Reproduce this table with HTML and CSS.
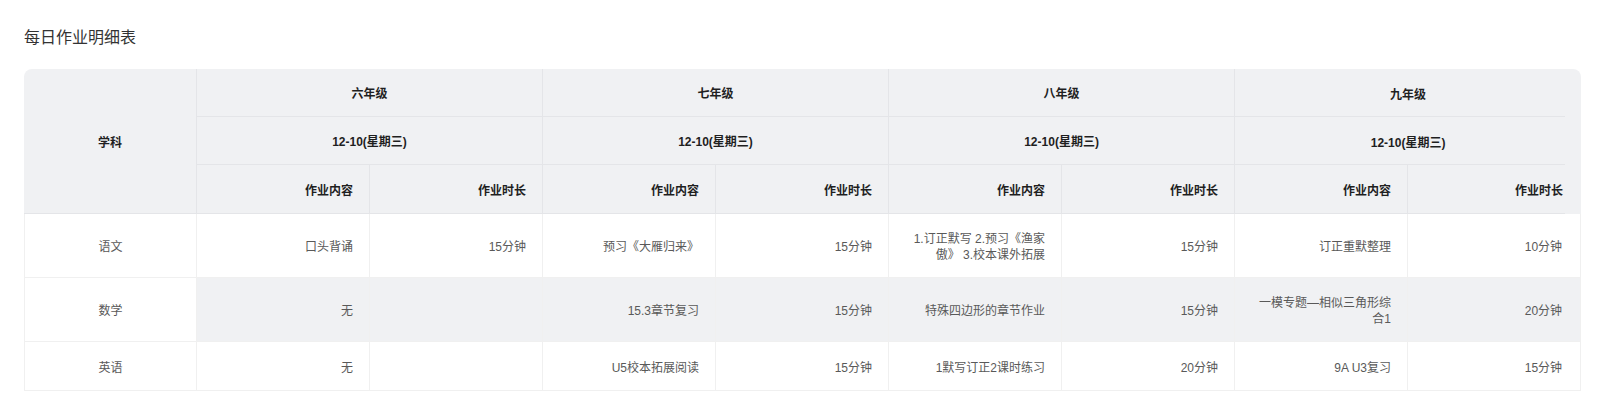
FILE: index.html
```html
<!DOCTYPE html>
<html lang="zh-CN">
<head>
<meta charset="utf-8">
<title>每日作业明细表</title>
<link rel="stylesheet" href="styles.css">
</head>
<body>
<div class="page">
  <h2 class="title">每日作业明细表</h2>
  <div class="table-wrap">
    <table class="hw-table">
      <colgroup>
        <col class="c"><col class="c"><col class="c"><col class="c"><col class="c"><col class="c"><col class="c"><col class="c"><col class="c">
      </colgroup>
      <thead>
        <tr class="hrow">
          <th rowspan="3" class="subj-h">学科</th>
          <th colspan="2" class="grade">六年级</th>
          <th colspan="2" class="grade">七年级</th>
          <th colspan="2" class="grade">八年级</th>
          <th colspan="2" class="grade last">九年级</th>
        </tr>
        <tr class="hrow">
          <th colspan="2" class="grade">12-10(星期三)</th>
          <th colspan="2" class="grade">12-10(星期三)</th>
          <th colspan="2" class="grade">12-10(星期三)</th>
          <th colspan="2" class="grade last">12-10(星期三)</th>
        </tr>
        <tr class="hrow third">
          <th class="sub">作业内容</th><th class="sub">作业时长</th>
          <th class="sub">作业内容</th><th class="sub">作业时长</th>
          <th class="sub">作业内容</th><th class="sub">作业时长</th>
          <th class="sub">作业内容</th><th class="sub last end">作业时长</th>
        </tr>
      </thead>
      <tbody>
        <tr class="brow tall">
          <td class="subj">语文</td>
          <td>口头背诵</td><td>15分钟</td>
          <td>预习《大雁归来》</td><td>15分钟</td>
          <td>1.订正默写 2.预习《渔家傲》 3.校本课外拓展</td><td>15分钟</td>
          <td>订正重默整理</td><td class="end">10分钟</td>
        </tr>
        <tr class="brow tall hover">
          <td class="subj">数学</td>
          <td>无</td><td></td>
          <td>15.3章节复习</td><td>15分钟</td>
          <td>特殊四边形的章节作业</td><td>15分钟</td>
          <td>一模专题—相似三角形综合1</td><td class="end">20分钟</td>
        </tr>
        <tr class="brow">
          <td class="subj">英语</td>
          <td>无</td><td></td>
          <td>U5校本拓展阅读</td><td>15分钟</td>
          <td>1默写订正2课时练习</td><td>20分钟</td>
          <td>9A U3复习</td><td class="end">15分钟</td>
        </tr>
      </tbody>
    </table>
  </div>
</div>
</body>
</html>
```

FILE: styles.css
```css
* { box-sizing: border-box; }

html, body {
  margin: 0;
  padding: 0;
  background: #ffffff;
}

body {
  font-family: "Liberation Sans", "Noto Sans CJK SC", sans-serif;
  font-size: 12px;
  color: #595959;
}

.page {
  padding: 26px 24px 0 24px;
}

.title {
  margin: 0 0 19px 0;
  font-size: 16px;
  line-height: 24px;
  font-weight: normal;
  color: #333333;
}

.table-wrap {
  width: 1557px;
  border-radius: 8px 8px 0 0;
  overflow: hidden;
}

.hw-table {
  width: 1557px;
  table-layout: fixed;
  border-collapse: separate;
  border-spacing: 0;
}

.hw-table col.c {
  width: 173px;
}

.hw-table th {
  background: #f0f1f3;
  color: #1f1f1f;
  font-weight: bold;
  line-height: 16px;
  padding: 3px 16px 0 16px;
  vertical-align: middle;
  border-right: 1px solid #e4e5e8;
  border-bottom: 1px solid #e4e5e8;
}

.hw-table th.grade {
  text-align: center;
}

.hw-table th.sub {
  text-align: right;
}

.hw-table th.subj-h {
  text-align: center;
}

.hw-table th.last {
  border-right: none;
  border-bottom: none;
  background: #f0f1f3 linear-gradient(#e4e5e8, #e4e5e8) no-repeat left bottom / calc(100% - 16px) 1px;
}

.hw-table .end {
  padding-right: 18px;
}

.hrow {
  height: 48px;
}

.hrow.third {
  height: 49px;
}

.brow {
  height: 49px;
}

.brow.tall {
  height: 64px;
}

.hw-table td {
  background: #ffffff;
  color: #595959;
  line-height: 16px;
  padding: 3px 16px 0 16px;
  text-align: right;
  vertical-align: middle;
  border-right: 1px solid #f0f0f0;
  border-bottom: 1px solid #f0f0f0;
  word-break: break-all;
}

.hw-table td.subj {
  text-align: center;
  border-left: 1px solid #f0f0f0;
}

.brow.hover td {
  background: #f0f1f3;
}

.brow.hover td.subj {
  background: #ffffff;
}
```
